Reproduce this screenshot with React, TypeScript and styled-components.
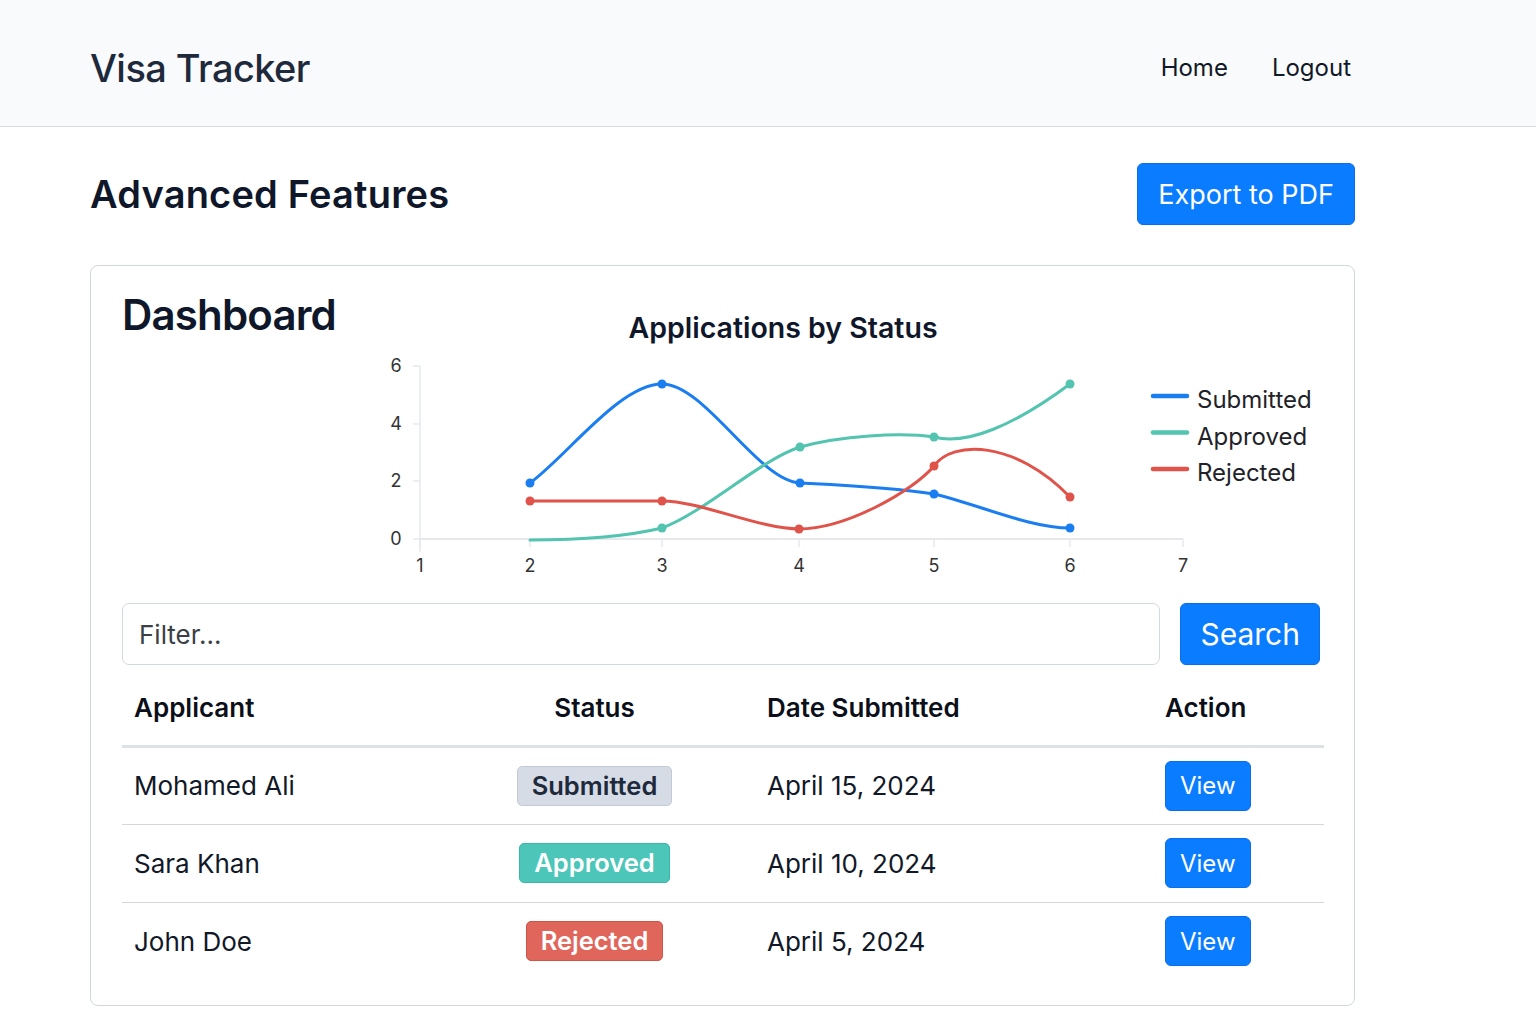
import React from 'react';
import styled, { createGlobalStyle } from 'styled-components';

const GlobalStyle = createGlobalStyle`
  * {
    box-sizing: border-box;
  }
  body {
    margin: 0;
    background: #ffffff;
    font-family: Inter, "Noto Sans", sans-serif;
    color: #111827;
  }
`;

const BLUE = '#0a7cff';

const Navbar = styled.header`
  height: 127px;
  padding: 9px 181px 0 90px;
  background: #f8fafc;
  border-bottom: 1px solid #d5dbe4;
  display: flex;
  align-items: center;
  justify-content: space-between;
`;

const Brand = styled.div`
  font-size: 38px;
  font-weight: 500;
  color: #1e293b;
  letter-spacing: -0.015em;
`;

const NavLinks = styled.nav`
  display: flex;
  gap: 44px;
  padding-right: 4px;
`;

const NavLink = styled.a`
  font-size: 24px;
  color: #111827;
  text-decoration: none;
`;

const Main = styled.main`
  width: 1265px;
  margin-left: 90px;
  padding-top: 36px;
`;

const PageHead = styled.div`
  display: flex;
  align-items: center;
  justify-content: space-between;
  height: 62px;
  margin-bottom: 40px;
`;

const PageTitle = styled.h1`
  margin: 0;
  font-size: 38px;
  font-weight: 600;
  color: #0f172a;
  letter-spacing: 0.005em;
`;

const PrimaryButton = styled.button<{ $size: 'lg' | 'md' | 'sm' }>`
  background: ${BLUE};
  color: #ffffff;
  border: 1px solid #0a6fe6;
  border-radius: 6px;
  font-family: Inter, "Noto Sans", sans-serif;
  cursor: pointer;
  font-size: ${(p) => (p.$size === 'lg' ? '27px' : p.$size === 'md' ? '30px' : '24px')};
  height: ${(p) => (p.$size === 'sm' ? '50px' : '62px')};
  padding: ${(p) => (p.$size === 'sm' ? '0 14px' : p.$size === 'md' ? '0 19px' : '0 20px')};
`;

const Card = styled.section`
  border: 1px solid #cfd6e0;
  border-radius: 8px;
  padding: 23px 31px 25px;
`;

const TopRow = styled.div`
  display: flex;
  align-items: flex-start;
`;

const CardTitle = styled.h2`
  margin: 0;
  width: 238px;
  flex-shrink: 0;
  font-size: 42px;
  font-weight: 600;
  line-height: 1.25;
  color: #0f172a;
  letter-spacing: -0.02em;
`;

const ChartSvg = styled.svg`
  display: block;
  font-family: Inter, "Noto Sans", sans-serif;
`;

const FilterRow = styled.form`
  display: flex;
  gap: 20px;
  margin: 18px 3px 0 0;
`;

const FilterInput = styled.input`
  flex: 1;
  height: 62px;
  border: 1.5px solid #d3d9e2;
  border-radius: 7px;
  padding: 0 16px;
  font-family: Inter, "Noto Sans", sans-serif;
  font-size: 26px;
  color: #111827;
  &::placeholder {
    color: #3b3f46;
  }
`;

const Table = styled.table`
  width: 1202px;
  border-collapse: collapse;
  table-layout: fixed;
`;

const Th = styled.th<{ $center?: boolean }>`
  height: 81px;
  padding: 6px 12px 0;
  font-size: 26px;
  font-weight: 600;
  color: #0b0f19;
  text-align: ${(p) => (p.$center ? 'center' : 'left')};
  border-bottom: 3px solid #dde1e8;
`;

const Tr = styled.tr`
  border-bottom: 1px solid #d3d8e0;
  &:last-child {
    border-bottom: none;
  }
`;

const Td = styled.td<{ $center?: boolean }>`
  height: 78px;
  padding: 0 12px;
  font-size: 26px;
  color: #111827;
  text-align: ${(p) => (p.$center ? 'center' : 'left')};
`;

type Status = 'Submitted' | 'Approved' | 'Rejected';

const badgeColors: Record<Status, { bg: string; border: string; fg: string }> = {
  Submitted: { bg: '#d6dce6', border: '#c3cad6', fg: '#1e293b' },
  Approved: { bg: '#4cc6b8', border: '#3bb6a8', fg: '#ffffff' },
  Rejected: { bg: '#e0665b', border: '#cf5448', fg: '#ffffff' },
};

const Badge = styled.span<{ $status: Status }>`
  display: inline-block;
  height: 40px;
  line-height: 38px;
  padding: 0 14px;
  border-radius: 5px;
  font-size: 25.5px;
  font-weight: 600;
  background: ${(p) => badgeColors[p.$status].bg};
  border: 1px solid ${(p) => badgeColors[p.$status].border};
  color: ${(p) => badgeColors[p.$status].fg};
`;

const rows: { name: string; status: Status; date: string }[] = [
  { name: 'Mohamed Ali', status: 'Submitted', date: 'April 15, 2024' },
  { name: 'Sara Khan', status: 'Approved', date: 'April 10, 2024' },
  { name: 'John Doe', status: 'Rejected', date: 'April 5, 2024' },
];

const series = [
  {
    name: 'Submitted',
    color: '#1a7ef0',
    d: 'M530,483 C568,455 620,384 662,384 C705,384 758,481 800,483 C840,485 890,487 934,494 C980,505 1030,528 1070,528',
    dots: [[530, 483], [662, 384], [800, 483], [934, 494], [1070, 528]],
  },
  {
    name: 'Approved',
    color: '#52c4b0',
    d: 'M530,540 C575,540 620,538 662,528 C705,512 760,460 800,447 C840,436 900,432 934,437 C966,446 1015,425 1070,384',
    dots: [[662, 528], [800, 447], [934, 437], [1070, 384]],
  },
  {
    name: 'Rejected',
    color: '#e0534a',
    d: 'M530,501 C575,501 620,501 662,501 C700,501 760,529 799,529 C845,529 912,492 934,466 C952,440 1015,440 1070,497',
    dots: [[530, 501], [662, 501], [799, 529], [934, 466], [1070, 497]],
  },
];

const xTicks = [
  [420, '1'], [530, '2'], [662, '3'], [799, '4'], [934, '5'], [1070, '6'], [1183, '7'],
] as const;
const yTicks = [
  [366, '6'], [424, '4'], [481, '2'], [539, '0'],
] as const;

const Chart = () => (
  <ChartSvg width={963} height={296} viewBox="360 289 963 296">
    <text x={783} y={338} textAnchor="middle" fontSize={28.5} fontWeight={600} fill="#0f172a">
      Applications by Status
    </text>
    <line x1={420} y1={366} x2={420} y2={552} stroke="#e6e8ec" strokeWidth={1.5} />
    <line x1={420} y1={539} x2={1183} y2={539} stroke="#e6e8ec" strokeWidth={2} />
    {yTicks.map(([y, label]) => (
      <g key={label}>
        <line x1={413} y1={y} x2={420} y2={y} stroke="#e6e8ec" strokeWidth={1.5} />
        <text x={396} y={y + 6} textAnchor="middle" fontSize={18} fill="#333">
          {label}
        </text>
      </g>
    ))}
    {xTicks.map(([x, label]) => (
      <g key={label}>
        <line x1={x} y1={539} x2={x} y2={547} stroke="#e6e8ec" strokeWidth={1.5} />
        <text x={x} y={572} textAnchor="middle" fontSize={18} fill="#333">
          {label}
        </text>
      </g>
    ))}
    {series.map((s) => (
      <g key={s.name}>
        <path d={s.d} fill="none" stroke={s.color} strokeWidth={3} strokeLinecap="round" />
        {s.dots.map(([x, y]) => (
          <circle key={x} cx={x} cy={y} r={4.5} fill={s.color} />
        ))}
      </g>
    ))}
    {series.map((s, i) => (
      <g key={`legend-${s.name}`}>
        <line
          x1={1153}
          y1={396 + i * 36.5}
          x2={1187}
          y2={396 + i * 36.5}
          stroke={s.color}
          strokeWidth={4.5}
          strokeLinecap="round"
        />
        <text x={1197} y={396 + i * 36.5 + 12} fontSize={24} fill="#1f2329">
          {s.name}
        </text>
      </g>
    ))}
  </ChartSvg>
);

const App = () => (
  <>
    <GlobalStyle />
    <Navbar>
      <Brand>Visa Tracker</Brand>
      <NavLinks>
        <NavLink href="#">Home</NavLink>
        <NavLink href="#">Logout</NavLink>
      </NavLinks>
    </Navbar>
    <Main>
      <PageHead>
        <PageTitle>Advanced Features</PageTitle>
        <PrimaryButton $size="lg">Export to PDF</PrimaryButton>
      </PageHead>
      <Card>
        <TopRow>
          <CardTitle>Dashboard</CardTitle>
          <Chart />
        </TopRow>
        <FilterRow onSubmit={(e) => e.preventDefault()}>
          <FilterInput placeholder="Filter..." />
          <PrimaryButton $size="md" type="submit">
            Search
          </PrimaryButton>
        </FilterRow>
        <Table>
          <colgroup>
            <col style={{ width: 312 }} />
            <col style={{ width: 321 }} />
            <col style={{ width: 398 }} />
            <col style={{ width: 171 }} />
          </colgroup>
          <thead>
            <tr>
              <Th>Applicant</Th>
              <Th $center>Status</Th>
              <Th>Date Submitted</Th>
              <Th>Action</Th>
            </tr>
          </thead>
          <tbody>
            {rows.map((r) => (
              <Tr key={r.name}>
                <Td>{r.name}</Td>
                <Td $center>
                  <Badge $status={r.status}>{r.status}</Badge>
                </Td>
                <Td>{r.date}</Td>
                <Td>
                  <PrimaryButton $size="sm">View</PrimaryButton>
                </Td>
              </Tr>
            ))}
          </tbody>
        </Table>
      </Card>
    </Main>
  </>
);

export default App;
